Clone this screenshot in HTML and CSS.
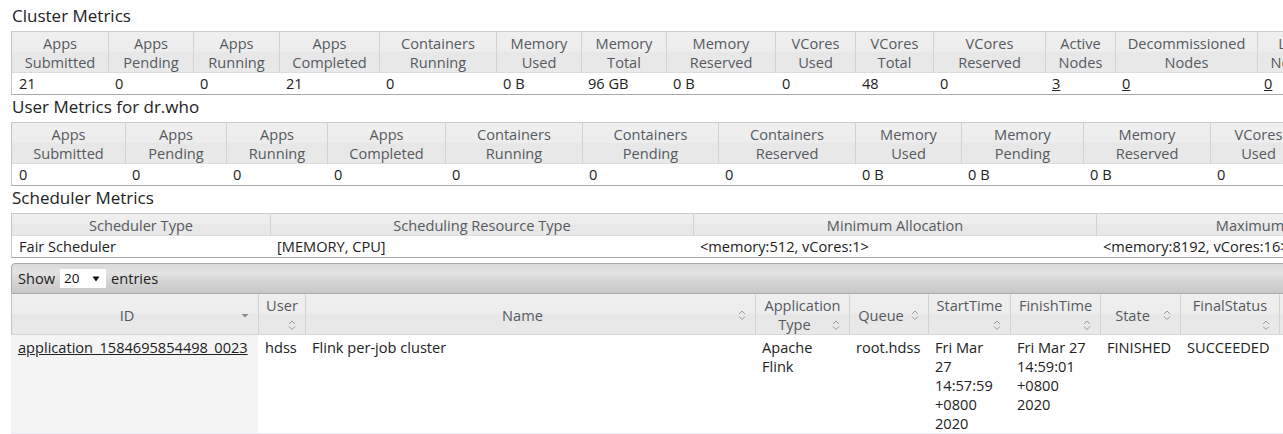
FILE: index.html
```html
<!DOCTYPE html>
<html>
<head>
<meta charset="utf-8">
<title>All Applications</title>
<link rel="stylesheet" href="styles.css">
</head>
<body>
<div class="page">
  <h3 class="section-title">Cluster Metrics</h3>
  <table class="metrics cluster">
    <thead>
      <tr>
        <th>Apps<br>Submitted</th><th>Apps<br>Pending</th><th>Apps<br>Running</th><th>Apps<br>Completed</th>
        <th>Containers<br>Running</th><th>Memory<br>Used</th><th>Memory<br>Total</th><th>Memory<br>Reserved</th>
        <th>VCores<br>Used</th><th>VCores<br>Total</th><th>VCores<br>Reserved</th><th>Active<br>Nodes</th>
        <th>Decommissioned<br>Nodes</th><th>Lost<br>Nodes</th><th>Unhealthy<br>Nodes</th><th>Rebooted<br>Nodes</th><th>Shutdown<br>Nodes</th>
      </tr>
    </thead>
    <tbody>
      <tr>
        <td>21</td><td>0</td><td>0</td><td>21</td><td>0</td><td>0 B</td><td>96 GB</td><td>0 B</td>
        <td>0</td><td>48</td><td>0</td><td><a href="#">3</a></td><td><a href="#">0</a></td><td><a href="#">0</a></td>
        <td><a href="#">0</a></td><td><a href="#">0</a></td><td><a href="#">0</a></td>
      </tr>
    </tbody>
  </table>

  <h3 class="section-title">User Metrics for dr.who</h3>
  <table class="metrics user">
    <thead>
      <tr>
        <th>Apps<br>Submitted</th><th>Apps<br>Pending</th><th>Apps<br>Running</th><th>Apps<br>Completed</th>
        <th>Containers<br>Running</th><th>Containers<br>Pending</th><th>Containers<br>Reserved</th>
        <th>Memory<br>Used</th><th>Memory<br>Pending</th><th>Memory<br>Reserved</th>
        <th>VCores<br>Used</th><th>VCores<br>Pending</th><th>VCores<br>Reserved</th>
      </tr>
    </thead>
    <tbody>
      <tr>
        <td>0</td><td>0</td><td>0</td><td>0</td><td>0</td><td>0</td><td>0</td>
        <td>0 B</td><td>0 B</td><td>0 B</td><td>0</td><td>0</td><td>0</td>
      </tr>
    </tbody>
  </table>

  <h3 class="section-title">Scheduler Metrics</h3>
  <table class="metrics sched">
    <thead>
      <tr>
        <th>Scheduler Type</th><th>Scheduling Resource Type</th><th>Minimum Allocation</th><th>Maximum Allocation</th>
      </tr>
    </thead>
    <tbody>
      <tr>
        <td>Fair Scheduler</td><td>[MEMORY, CPU]</td><td>&lt;memory:512, vCores:1&gt;</td><td>&lt;memory:8192, vCores:16&gt;</td>
      </tr>
    </tbody>
  </table>

  <div class="apps">
    <div class="toolbar">
      <label class="length">Show
        <span class="select">20
          <svg class="select-arrow" width="8" height="6" viewBox="0 0 8 6"><path d="M0.5 0.5 L7.5 0.5 L4 5.5 Z" fill="#111"/></svg>
        </span>
        entries</label>
    </div>
    <table class="apptable">
      <thead>
        <tr>
          <th class="sorted">ID<span class="sort-icon"><svg width="16" height="16" viewBox="0 0 16 16"><path d="M4.5 7 L11.5 7 L8 10.5 Z" fill="#8a8a8a"/></svg></span></th>
          <th>User<span class="sort-icon"><svg width="16" height="16" viewBox="0 0 16 16"><path d="M5 7 L8 4 L11 7 M5 9.5 L8 12.5 L11 9.5" fill="none" stroke="#9a9a9a" stroke-width="1"/></svg></span></th>
          <th>Name<span class="sort-icon"><svg width="16" height="16" viewBox="0 0 16 16"><path d="M5 7 L8 4 L11 7 M5 9.5 L8 12.5 L11 9.5" fill="none" stroke="#9a9a9a" stroke-width="1"/></svg></span></th>
          <th>Application Type<span class="sort-icon"><svg width="16" height="16" viewBox="0 0 16 16"><path d="M5 7 L8 4 L11 7 M5 9.5 L8 12.5 L11 9.5" fill="none" stroke="#9a9a9a" stroke-width="1"/></svg></span></th>
          <th>Queue<span class="sort-icon"><svg width="16" height="16" viewBox="0 0 16 16"><path d="M5 7 L8 4 L11 7 M5 9.5 L8 12.5 L11 9.5" fill="none" stroke="#9a9a9a" stroke-width="1"/></svg></span></th>
          <th>StartTime<span class="sort-icon"><svg width="16" height="16" viewBox="0 0 16 16"><path d="M5 7 L8 4 L11 7 M5 9.5 L8 12.5 L11 9.5" fill="none" stroke="#9a9a9a" stroke-width="1"/></svg></span></th>
          <th>FinishTime<span class="sort-icon"><svg width="16" height="16" viewBox="0 0 16 16"><path d="M5 7 L8 4 L11 7 M5 9.5 L8 12.5 L11 9.5" fill="none" stroke="#9a9a9a" stroke-width="1"/></svg></span></th>
          <th>State<span class="sort-icon"><svg width="16" height="16" viewBox="0 0 16 16"><path d="M5 7 L8 4 L11 7 M5 9.5 L8 12.5 L11 9.5" fill="none" stroke="#9a9a9a" stroke-width="1"/></svg></span></th>
          <th>FinalStatus<span class="sort-icon"><svg width="16" height="16" viewBox="0 0 16 16"><path d="M5 7 L8 4 L11 7 M5 9.5 L8 12.5 L11 9.5" fill="none" stroke="#9a9a9a" stroke-width="1"/></svg></span></th>
          <th>Running Containers<span class="sort-icon"><svg width="16" height="16" viewBox="0 0 16 16"><path d="M5 7 L8 4 L11 7 M5 9.5 L8 12.5 L11 9.5" fill="none" stroke="#9a9a9a" stroke-width="1"/></svg></span></th>
          <th>Allocated CPU VCores<span class="sort-icon"><svg width="16" height="16" viewBox="0 0 16 16"><path d="M5 7 L8 4 L11 7 M5 9.5 L8 12.5 L11 9.5" fill="none" stroke="#9a9a9a" stroke-width="1"/></svg></span></th>
        </tr>
      </thead>
      <tbody>
        <tr>
          <td class="sorted-cell"><a href="#">application_1584695854498_0023</a></td>
          <td>hdss</td>
          <td>Flink per-job cluster</td>
          <td>Apache Flink</td>
          <td>root.hdss</td>
          <td>Fri Mar 27 14:57:59 +0800 2020</td>
          <td>Fri Mar 27 14:59:01 +0800 2020</td>
          <td>FINISHED</td>
          <td>SUCCEEDED</td>
          <td>N/A</td>
          <td>N/A</td>
        </tr>
      </tbody>
    </table>
  </div>
</div>
</body>
</html>
```

FILE: styles.css
```css
html, body {
  margin: 0;
  padding: 0;
  overflow: hidden;
  background: #ffffff;
}

body {
  font-family: "Open Sans", "Noto Sans", sans-serif;
  font-size: 14.6px;
  line-height: 19px;
  color: #222222;
}

.page {
  padding: 4px 0 0 11px;
  width: 1700px;
}

.section-title {
  margin: 1px 0 4px 1px;
  font-size: 17px;
  font-weight: normal;
  line-height: 22px;
  color: #222222;
}

a {
  color: #222222;
  text-decoration: underline;
}

/* ---------- metrics tables ---------- */
.metrics {
  border-collapse: separate;
  border-spacing: 0;
  table-layout: fixed;
}

.metrics th,
.metrics td {
  box-sizing: border-box;
  overflow: hidden;
  white-space: nowrap;
}

.metrics th {
  font-weight: normal;
  color: #565a60;
  text-align: center;
  padding: 2px 4px 0;
  background: linear-gradient(#efefef 0%, #ededed 48%, #e7e7e7 52%, #e9e9e9 100%);
  border-top: 1px solid #cccccc;
  border-left: 1px solid #d3d3d3;
  border-bottom: 1px solid #dddddd;
}

.metrics th:first-child {
  border-left-color: #c4c4c4;
}

.metrics td {
  text-align: left;
  padding: 1px 7px;
  border-bottom: 1px solid #a9a9a9;
  background: #ffffff;
}

.metrics td:first-child {
  border-left: 1px solid #c4c4c4;
}

/* cluster metrics column widths */
.cluster { width: 1576px; }
.cluster th:nth-child(1) { width: 97px; }
.cluster th:nth-child(2) { width: 85px; }
.cluster th:nth-child(3) { width: 86px; }
.cluster th:nth-child(4) { width: 100px; }
.cluster th:nth-child(5) { width: 117px; }
.cluster th:nth-child(6) { width: 85px; }
.cluster th:nth-child(7) { width: 85px; }
.cluster th:nth-child(8) { width: 109px; }
.cluster th:nth-child(9) { width: 80px; }
.cluster th:nth-child(10) { width: 78px; }
.cluster th:nth-child(11) { width: 112px; }
.cluster th:nth-child(12) { width: 70px; }
.cluster th:nth-child(13) { width: 142px; }
.cluster th:nth-child(14) { width: 70px; }
.cluster th:nth-child(15) { width: 90px; }
.cluster th:nth-child(16) { width: 90px; }
.cluster th:nth-child(17) { width: 80px; }

/* user metrics column widths */
.user { width: 1501px; }
.user th:nth-child(1) { width: 114px; }
.user th:nth-child(2) { width: 101px; }
.user th:nth-child(3) { width: 101px; }
.user th:nth-child(4) { width: 118px; }
.user th:nth-child(5) { width: 137px; }
.user th:nth-child(6) { width: 136px; }
.user th:nth-child(7) { width: 137px; }
.user th:nth-child(8) { width: 106px; }
.user th:nth-child(9) { width: 122px; }
.user th:nth-child(10) { width: 127px; }
.user th:nth-child(11) { width: 96px; }
.user th:nth-child(12) { width: 100px; }
.user th:nth-child(13) { width: 106px; }

/* scheduler metrics column widths */
.sched { width: 1463px; }
.sched th:nth-child(1) { width: 259px; }
.sched th:nth-child(2) { width: 423px; }
.sched th:nth-child(3) { width: 403px; }
.sched th:nth-child(4) { width: 378px; }

/* ---------- applications table ---------- */
.apps {
  margin-top: 5px;
  width: 1480px;
}

.toolbar {
  height: 29px;
  border: 1px solid #aaaaaa;
  border-radius: 4px 4px 0 0;
  background: linear-gradient(#d9d9d9 0%, #e3e3e3 30%, #d2d2d2 65%, #c8c8c8 100%);
  display: flex;
  align-items: center;
  padding: 0 6px;
  color: #222222;
}

.length {
  display: flex;
  align-items: center;
  gap: 5px;
}

.select {
  display: inline-flex;
  align-items: center;
  justify-content: space-between;
  box-sizing: border-box;
  width: 46px;
  height: 19px;
  padding: 0 6px 0 4px;
  background: #ffffff;
  font-size: 13.5px;
  color: #111111;
}

.apptable {
  border-collapse: separate;
  border-spacing: 0;
  table-layout: fixed;
  width: 1480px;
}

.apptable th,
.apptable td {
  box-sizing: border-box;
}

.apptable th {
  font-weight: normal;
  color: #565a60;
  text-align: center;
  vertical-align: middle;
  padding: 2px 5px 0;
  background: linear-gradient(#efefef 0%, #ededed 48%, #e7e7e7 52%, #e9e9e9 100%);
  border-left: 1px solid #d3d3d3;
  border-bottom: 1px solid #d6d6d6;
}

.apptable th:first-child {
  border-left-color: #c4c4c4;
}

.sort-icon {
  float: right;
  width: 16px;
  height: 19px;
  display: flex;
  align-items: center;
  justify-content: center;
}

.sort-icon svg {
  display: block;
}

.apptable td {
  vertical-align: top;
  text-align: left;
  padding: 3px 7px 0 7px;
  background: #ffffff;
  border-bottom: 1px solid #ebebf3;
}

.apptable td.sorted-cell {
  background: #f4f4f4;
  padding-left: 7px;
}

.apptable th:nth-child(1) { width: 247px; }
.apptable th:nth-child(2) { width: 47px; }
.apptable th:nth-child(3) { width: 450px; }
.apptable th:nth-child(4) { width: 94px; }
.apptable th:nth-child(5) { width: 79px; }
.apptable th:nth-child(6) { width: 82px; }
.apptable th:nth-child(7) { width: 90px; }
.apptable th:nth-child(8) { width: 80px; }
.apptable th:nth-child(9) { width: 99px; }
.apptable th:nth-child(10) { width: 105px; }
.apptable th:nth-child(11) { width: 107px; }
```
